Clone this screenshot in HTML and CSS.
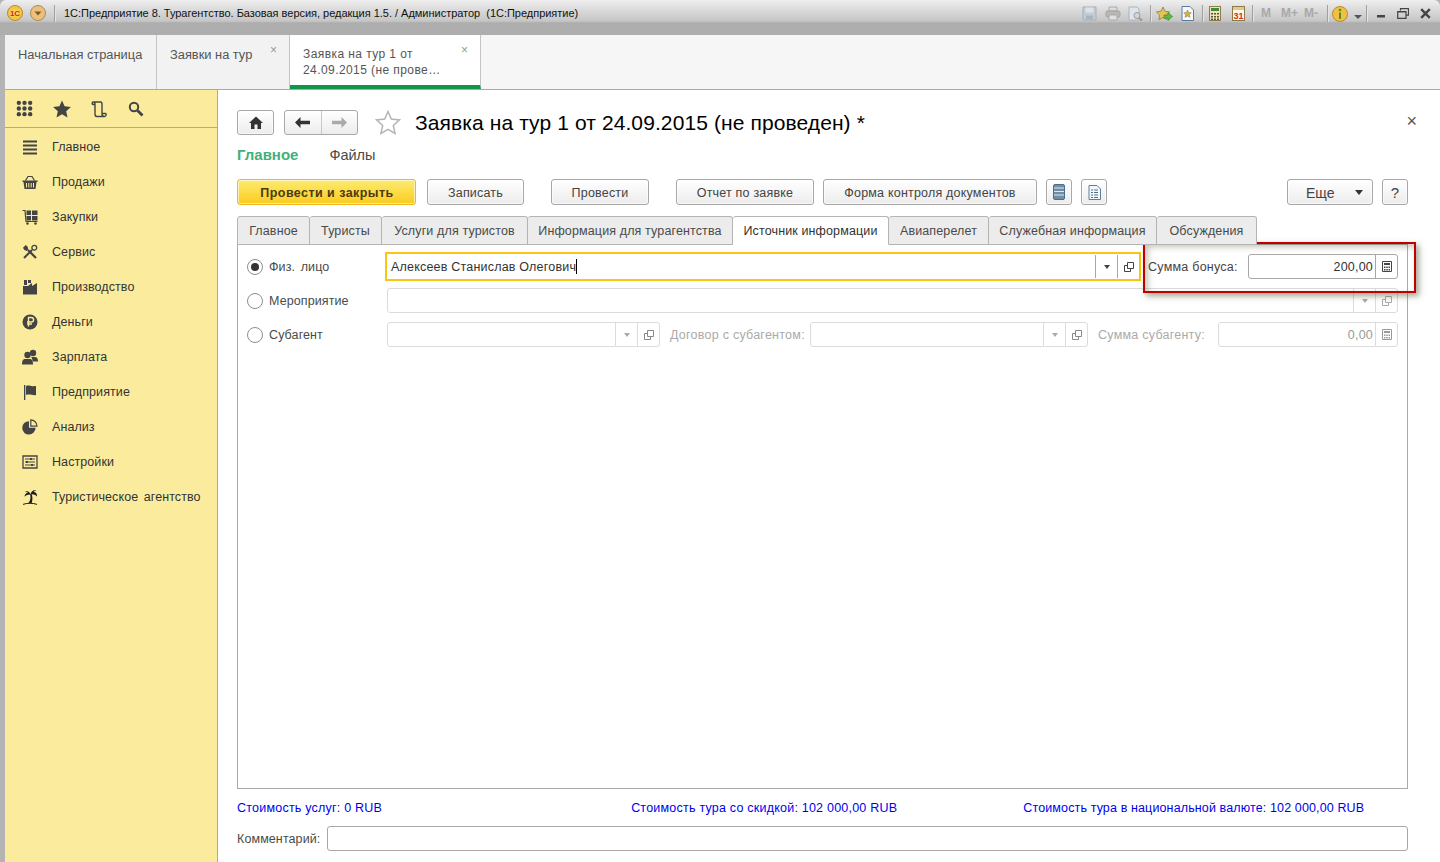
FILE: index.html
```html
<!DOCTYPE html>
<html lang="ru">
<head>
<meta charset="utf-8">
<title>Заявка на тур</title>
<link rel="stylesheet" href="styles.css">
</head>
<body>
<div class="window">
  <header class="titlebar">
    <svg class="logo" width="16" height="16" viewBox="0 0 16 16"><circle cx="8" cy="8" r="7.500" fill="#f5c542" stroke="#b98a2c"/><ellipse cx="8" cy="8" rx="5.500" ry="4" fill="#f0d060"/><text x="8" y="11" font-size="8" font-weight="700" text-anchor="middle" fill="#d8261c" font-family="Liberation Sans">1С</text></svg>
    <svg class="logo2" width="16" height="16" viewBox="0 0 16 16"><circle cx="8" cy="8" r="7.500" fill="#ecc07a" stroke="#a98a5c"/><path d="M4.500 6.500h7L8 10.500z" fill="#7a5a30"/></svg>
    <span class="tsep first"></span>
    <span class="wintitle">1С:Предприятие 8. Турагентство. Базовая версия, редакция 1.5. / Администратор  (1С:Предприятие)</span>
    <div class="tools">
      <svg class="t-save" width="15" height="15" viewBox="0 0 15 15"><path d="M1 1h13v13H1z" fill="#c3ccd2" stroke="#a3b0ba"/><path d="M3.500 1.500h8v5h-8z" fill="#dde2e6"/><path d="M4 9.500h7v4H4z" fill="#a9b5be"/></svg>
      <svg class="t-print" width="16" height="15" viewBox="0 0 16 15"><path d="M4 1h8v4H4z" fill="#ddd" stroke="#aaa"/><rect x="1" y="5" width="14" height="6" rx="1.500" fill="#b9b6b4" stroke="#a5a2a0"/><path d="M4 9h8v5H4z" fill="#e2e0de" stroke="#aaa"/></svg>
      <svg class="t-prev" width="16" height="15" viewBox="0 0 16 15"><path d="M2 1h8l2 2v11H2z" fill="#dfe5ea" stroke="#a9b5be"/><circle cx="10" cy="9.500" r="3" fill="#cfd7dd" stroke="#999"/><path d="m12 12 3 2.500" stroke="#999" stroke-width="2"/></svg>
      <span class="tsep s1"></span>
      <svg class="t-fav" width="17" height="16" viewBox="0 0 17 16"><path d="m7 1 2 4.300 4.600.6-3.300 3.200.8 4.600L7 11.500l-4.100 2.200.8-4.600L.4 5.900 5 5.300z" fill="#e6c650" stroke="#8d7b3c" stroke-width=".8"/><path d="M8 9h4V6.500l4.500 4-4.500 4V12H8z" fill="#5dbb46" stroke="#3c8a2b" stroke-width=".7"/></svg>
      <svg class="t-doc" width="13" height="15" viewBox="0 0 13 15"><path d="M1 .5h8l3.500 3.500v10.500H1z" fill="#f4f8fc" stroke="#5d7d9c"/><path d="m6.500 4 1.100 2.600 2.700.2-2 1.800.6 2.700-2.400-1.400-2.400 1.400.6-2.700-2-1.800 2.700-.2z" fill="#d8b13c" stroke="#8a7430" stroke-width=".5"/></svg>
      <span class="tsep s2"></span>
      <svg class="t-calc" width="12" height="15" viewBox="0 0 12 15"><rect x=".5" y=".5" width="11" height="14" fill="#f1e2b8" stroke="#8f7a4a"/><path d="M2 2h8v3H2z" fill="#3f8a3c"/><path d="M2 7h2v1.500H2zm3 0h2v1.500H5zm3 0h2v1.500H8zM2 10h2v1.500H2zm3 0h2v1.500H5zm3 0h2v1.500H8zM2 12.500h2V14H2zm3 0h2V14H5zm3 0h2V14H8z" fill="#554"/></svg>
      <svg class="t-cal" width="13" height="15" viewBox="0 0 13 15"><rect x=".5" y=".5" width="12" height="14" fill="#fbf6e6" stroke="#8f7a4a"/><path d="M1 1h11v3H1z" fill="#e3c98d"/><text x="6.500" y="13" font-size="9" font-weight="700" text-anchor="middle" fill="#dd2c1c" font-family="Liberation Sans">31</text></svg>
      <span class="tsep s3"></span>
      <span class="mem m1">M</span><span class="mem m2">M+</span><span class="mem m3">M-</span>
      <span class="tsep s4"></span>
      <svg class="t-info" width="16" height="16" viewBox="0 0 16 16"><circle cx="8" cy="8" r="7.500" fill="#f0c040" stroke="#b98a2c"/><circle cx="8" cy="4" r="1.300" fill="#5d8a30"/><path d="M7 6.500h2V13H7z" fill="#5d8a30"/></svg>
      <svg class="t-drop" width="8" height="5" viewBox="0 0 8 5"><path d="M0 1h8L4 5z" fill="#555"/></svg>
      <span class="tsep s5"></span>
      <svg class="t-min" width="8" height="3" viewBox="0 0 8 3"><path d="M0 0h8v2.500H0z" fill="#444"/></svg>
      <svg class="t-max" width="12" height="11" viewBox="0 0 12 11"><path d="M3.500 2.500V.7h8v6.500H9.500M.7 3.500h8.300v6.800H.7z" fill="none" stroke="#444" stroke-width="1.200"/><path d="M1 3h8v1.500H1z" fill="#444"/></svg>
      <svg class="t-close" width="11" height="11" viewBox="0 0 11 11"><path d="m1.200 1.200 8.600 8.600M9.800 1.200l-8.600 8.600" stroke="#444" stroke-width="2.400"/></svg>
    </div>
  </header>

  <nav class="opentabs">
    <div class="otab w1">Начальная страница</div>
    <div class="otab w2">Заявки на тур<span class="ox">×</span></div>
    <div class="otab w3 current"><span class="twoline">Заявка на тур 1 от<br>24.09.2015 (не прове…</span><span class="ox">×</span></div>
  </nav>

  <div class="body">
    <aside class="side">
      <div class="sidetop">
        <svg width="17" height="17" viewBox="0 0 18 18" fill="#444"><circle cx="3" cy="3" r="2.300"/><circle cx="9" cy="3" r="2.300"/><circle cx="15" cy="3" r="2.300"/><circle cx="3" cy="9" r="2.300"/><circle cx="9" cy="9" r="2.300"/><circle cx="15" cy="9" r="2.300"/><circle cx="3" cy="15" r="2.300"/><circle cx="9" cy="15" r="2.300"/><circle cx="15" cy="15" r="2.300"/></svg>
        <svg width="18" height="18" viewBox="0 0 18 18" fill="#444"><path d="m9 .5 2.600 5.800 6.300.7-4.700 4.200 1.300 6.300L9 14.300l-5.500 3.200 1.300-6.300L.1 7l6.300-.7z"/></svg>
        <svg width="17" height="18" viewBox="0 0 17 18" fill="none" stroke="#444" stroke-width="1.400"><path d="M3 2h6.500c1 0 1.500.8 1.500 2v10c0 1.500 1 2.500 2.500 2.500H6c-1.500 0-2-1-2-2.500V4C4 2.800 3.500 2 2 2c-1 0-1.200 2.500 0 2.500h2M11 13.500h3.500c1 0 1 3-1 3"/></svg>
        <svg width="16" height="16" viewBox="0 0 16 16" fill="none" stroke="#444"><circle cx="6" cy="6" r="4.200" stroke-width="2"/><path d="m9.500 9.500 5 5" stroke-width="2.800"/></svg>
      </div>
      <ul class="menu">
        <li><svg width="16" height="16" viewBox="0 0 16 16" fill="#444"><path d="M1 1.500h14v2H1zM1 5.500h14v2H1zM1 9.500h14v2H1zM1 13.500h14v2H1z"/></svg>Главное</li>
        <li><svg width="16" height="16" viewBox="0 0 16 16" fill="#444"><path d="M.5 6.500h15v1.500h-1l-1 7h-11l-1-7h-1z"/><path d="M3.500 6.500 6 2.500h4l2.500 4" fill="none" stroke="#444" stroke-width="1.200"/><path d="M4.500 9v4.500M6.800 9v4.500M9.200 9v4.500M11.500 9v4.500" stroke="#fbeb9b" stroke-width="1"/></svg>Продажи</li>
        <li><svg width="16" height="16" viewBox="0 0 16 16" fill="#444"><path d="M4.500 1.500h4.500v4.500H4.500zM10 1.500h5.500v4.500H10zM4.500 7h4.500v4.500H4.500zM10 7h5.500v4.500H10z"/><path d="M.5 1.500h2.500l1 11h11.500" fill="none" stroke="#444" stroke-width="1.200"/><circle cx="5.500" cy="14.500" r="1.300"/><circle cx="13.500" cy="14.500" r="1.300"/></svg>Закупки</li>
        <li><svg width="16" height="16" viewBox="0 0 16 16" fill="none" stroke="#444"><path d="M6 6 14 14" stroke-width="2.200"/><path d="M1 3.800 3.800 1c1.500 1 2.700 2.800 2.300 4.600L4.700 7C3 6.800 1.800 5.500 1 3.800z" fill="#444" stroke="none"/><path d="M10 6 2 14" stroke-width="2"/><circle cx="12.300" cy="3.700" r="2.400" stroke-width="1.300"/></svg>Сервис</li>
        <li><svg width="16" height="16" viewBox="0 0 16 16" fill="#444"><path d="M2 1h3v5h-3zM6 1h3v3h-3zM1 7l5 0 4-3v3l5-3v11.500H1z"/></svg>Производство</li>
        <li><svg width="16" height="16" viewBox="0 0 16 16"><circle cx="8" cy="8" r="7.500" fill="#444"/><path d="M6.500 12.500v-9h2.800c1.500 0 2.300 1 2.300 2.300S10.800 8 9.300 8H5M5 10h5" fill="none" stroke="#fbeb9b" stroke-width="1.400"/></svg>Деньги</li>
        <li><svg width="16" height="16" viewBox="0 0 16 16" fill="#444"><circle cx="11" cy="4" r="3.200"/><path d="M9 8h4c2 0 3 1.500 3 4.500h-5.500C10.500 10.500 10 9 9 8z"/><circle cx="5.500" cy="6" r="3.200"/><path d="M3 10h5c1.700 0 3 1.500 3 5.500H0C0 11.500 1.200 10 3 10z"/></svg>Зарплата</li>
        <li><svg width="16" height="16" viewBox="0 0 16 16" fill="#444"><path d="M2 1h1.300v15H2z"/><path d="M4 2c3-1.500 5 1 8.500 0H14v9c-3 1-6-1.500-10 0z"/></svg>Предприятие</li>
        <li><svg width="16" height="16" viewBox="0 0 16 16" fill="#444"><path d="M7 2.200V8.800h6.600A6.700 6.700 0 1 1 7 2.200z"/><path d="M8.800.8A6.500 6.500 0 0 1 15 7.200H8.800z" fill="none" stroke="#444" stroke-width="1.200"/></svg>Анализ</li>
        <li><svg width="16" height="16" viewBox="0 0 16 16" fill="none" stroke="#444"><path d="M1 2h14v12H1z" stroke-width="1.300"/><path d="M3 5h10M3 8h10M3 11h10" stroke-width="1"/><path d="M9 4v2M5 7v2M10 10v2" stroke-width="2"/></svg>Настройки</li>
        <li><svg width="16" height="16" viewBox="0 0 16 16" fill="#1c1c1c"><path d="M8 5c1 3 .5 6.500-1.500 9h3.200c1-3 1-6.500-.2-9z"/><path d="M8.500 5.500C7.500 2.500 5 1.500 3 3c1.200-.2 2.200 0 3 .8-2 .2-3.500 1.800-3.500 4C4 6 6.500 5.300 8.500 5.500zM8.500 5.500C9 2.300 11.500.3 14.500 1.500c-1.300.1-2.300.7-3 1.600C13.700 3 15.300 4.800 15 7.500 13.500 5.800 11 5 8.500 5.500z"/><path d="M1 15.400c4-1.500 10-1.500 14 0" stroke="#1c1c1c" fill="none"/></svg><span>Туристическое агентство</span></li>
      </ul>
    </aside>

    <main class="content">
      <div class="headrow">
        <button class="btn home"><svg width="14" height="13" viewBox="0 0 14 13" fill="#333"><path d="M7 .5 14 7h-2v6H8.500V8.500h-3V13H2V7H0z"/></svg></button>
        <div class="navgroup">
          <span class="navb"><svg width="15" height="11" viewBox="0 0 15 11" fill="#333"><path d="M0 5.500 5.500 0v3.700H15v3.600H5.500V11z"/></svg></span>
          <span class="navb"><svg width="15" height="11" viewBox="0 0 15 11" fill="#aaa"><path d="M15 5.500 9.500 0v3.700H0v3.600h9.500V11z"/></svg></span>
        </div>
        <svg class="favstar" width="26" height="25" viewBox="0 0 26 25"><path d="m13 1.500 3.300 7.600 8.200.8-6.200 5.500 1.800 8.100-7.100-4.200-7.100 4.200 1.800-8.100L1.500 9.900l8.200-.8z" fill="#fff" stroke="#b5b5b5" stroke-width="1.500"/></svg>
        <h1>Заявка на тур 1 от 24.09.2015 (не проведен) *</h1>
        <span class="closex">×</span>
      </div>

      <div class="sections"><span class="sec on">Главное</span><span class="sec">Файлы</span></div>

      <div class="cmdbar">
        <button class="btn primary b1">Провести и закрыть</button>
        <button class="btn b2">Записать</button>
        <button class="btn b3">Провести</button>
        <button class="btn b4">Отчет по заявке</button>
        <button class="btn b5">Форма контроля документов</button>
        <button class="btn b6"><svg width="12" height="16" viewBox="0 0 12 16"><rect x=".5" y=".5" width="11" height="15" rx="1.500" fill="#6f8ea8" stroke="#4f6c85"/><path d="M1 4h10M1 7.500h10M1 11h10" stroke="#dfe8ef"/></svg></button>
        <button class="btn b7"><svg width="13" height="15" viewBox="0 0 13 15"><path d="M1 .5h8l3.500 3.500v10.500H1z" fill="#f4f8fc" stroke="#5d7d9c"/><path d="M3 5h2M6 5h4M3 7.500h2M6 7.500h4M3 10h2M6 10h4M3 12.500h2M6 12.500h4" stroke="#51708c"/></svg></button>
        <button class="btn b8"><span>Еще</span><svg width="8" height="5" viewBox="0 0 8 5"><path d="M0 0h8L4 5z" fill="#333"/></svg></button>
        <button class="btn b9">?</button>
      </div>

      <div class="ftabs">
        <span class="ftab f1">Главное</span><span class="ftab f2">Туристы</span><span class="ftab f3">Услуги для туристов</span><span class="ftab f4">Информация для турагентства</span><span class="ftab f5 active">Источник информации</span><span class="ftab f6">Авиаперелет</span><span class="ftab f7">Служебная информация</span><span class="ftab f8">Обсуждения</span>
      </div>

      <section class="panel">
        <div class="frow r1">
          <span class="radio on"></span><label class="rlabel">Физ. лицо</label>
          <div class="field focus"><span class="val">Алексеев Станислав Олегович</span><span class="caret"></span><span class="fbtn"><svg width="6" height="4" viewBox="0 0 6 4"><path d="M0 0h6L3 4z" fill="#444"/></svg></span><span class="fbtn"><svg class="openico" width="10" height="10" viewBox="0 0 10 10" fill="none" stroke="#444"><path d="M3.500 .5h6v6h-6zM3 3.500H.5v6h6V7"/></svg></span></div>
          <label class="flabel bonus">Сумма бонуса:</label>
          <div class="field num active"><span class="val right">200,00</span><span class="fbtn calc"><svg width="10" height="11" viewBox="0 0 10 11" fill="#444"><path d="M.5.500h9v10h-9z" fill="none" stroke="#444"/><path d="M2 2h6v2H2zM2 5.500h1.500V7H2zM4.300 5.500h1.500V7H4.300zM6.600 5.500H8V7H6.600zM2 8h1.500v1.500H2zM4.300 8h1.500v1.500H4.300zM6.600 8H8v1.500H6.600z"/></svg></span></div>
        </div>
        <div class="frow r2">
          <span class="radio"></span><label class="rlabel">Мероприятие</label>
          <div class="field dis wide"><span class="val"></span><span class="fbtn"><svg width="6" height="4" viewBox="0 0 6 4"><path d="M0 0h6L3 4z" fill="#aaa"/></svg></span><span class="fbtn"><svg class="openico" width="10" height="10" viewBox="0 0 10 10" fill="none" stroke="#aaa"><path d="M3.500 .5h6v6h-6zM3 3.500H.5v6h6V7"/></svg></span></div>
        </div>
        <div class="frow r3">
          <span class="radio"></span><label class="rlabel">Субагент</label>
          <div class="field dis sub"><span class="val"></span><span class="fbtn"><svg width="6" height="4" viewBox="0 0 6 4"><path d="M0 0h6L3 4z" fill="#aaa"/></svg></span><span class="fbtn"><svg class="openico" width="10" height="10" viewBox="0 0 10 10" fill="none" stroke="#888"><path d="M3.500 .5h6v6h-6zM3 3.500H.5v6h6V7"/></svg></span></div>
          <label class="flabel muted dog">Договор с субагентом:</label>
          <div class="field dis contract"><span class="val"></span><span class="fbtn"><svg width="6" height="4" viewBox="0 0 6 4"><path d="M0 0h6L3 4z" fill="#aaa"/></svg></span><span class="fbtn"><svg class="openico" width="10" height="10" viewBox="0 0 10 10" fill="none" stroke="#888"><path d="M3.500 .5h6v6h-6zM3 3.500H.5v6h6V7"/></svg></span></div>
          <label class="flabel muted sumsub">Сумма субагенту:</label>
          <div class="field dis num"><span class="val right">0,00</span><span class="fbtn calc"><svg width="10" height="11" viewBox="0 0 10 11" fill="#999"><path d="M.5.500h9v10h-9z" fill="none" stroke="#999"/><path d="M2 2h6v2H2zM2 5.500h1.500V7H2zM4.300 5.500h1.500V7H4.300zM6.600 5.500H8V7H6.600zM2 8h1.500v1.500H2zM4.300 8h1.500v1.500H4.300zM6.600 8H8v1.500H6.600z"/></svg></span></div>
        </div>
      </section>

      <div class="totals">
        <span class="t1">Стоимость услуг: 0 RUB</span>
        <span class="t2">Стоимость тура со скидкой: 102 000,00 RUB</span>
        <span class="t3">Стоимость тура в национальной валюте: 102 000,00 RUB</span>
      </div>
      <div class="commentrow"><label>Комментарий:</label><div class="comment"></div></div>
    </main>
  </div>
  <div class="redbox"></div>
</div>
</body>
</html>
```
FILE: styles.css
```css
* { box-sizing: border-box; }
html, body { margin: 0; height: 100%; overflow: hidden; }
body { font-family: "Liberation Sans", Arial, sans-serif; font-size: 12.5px; color: #4a4a4a; background: #fff; }
.window { position: relative; width: 1440px; height: 862px; display: flex; flex-direction: column; background: #b4b4b4; }
button { font: inherit; color: inherit; }

.titlebar { height: 35px; flex: none; display: flex; align-items: flex-start; padding: 5px 0 0 7px; border-radius: 6px 6px 0 0; background: linear-gradient(#efefef 0, #dedede 8px, #c6c6c6 21px, #adadad 23px, #aeaeae 100%); }
.logo { flex: none; }
.logo2 { flex: none; margin-left: 7px; }
.tsep { flex: none; width: 1px; height: 17px; background: #9f9f9f; box-shadow: 1px 0 0 #e4e4e4; }
.tsep.first { margin: 0 9px 0 8px; }
.wintitle { font-size: 11px; letter-spacing: -.02px; color: #111; line-height: 16px; white-space: pre; }
.tools { margin-left: auto; display: flex; align-items: center; height: 17px; width: 358px; flex: none; position: relative; }
.tools svg { flex: none; }
.t-save { margin-left: 0; }
.t-print { margin-left: 8px; }
.t-prev { margin-left: 6px; }
.tsep.s1 { margin-left: 7px; }
.t-fav { margin-left: 5px; }
.t-doc { margin-left: 8px; }
.tsep.s2 { margin-left: 8px; }
.t-calc { margin-left: 6px; }
.t-cal { margin-left: 11px; }
.tsep.s3 { margin-left: 7px; }
.mem { font-size: 12px; font-weight: 700; color: #a8a8a8; line-height: 15px; }
.m1 { margin-left: 8px; width: 11px; }
.m2 { margin-left: 9px; width: 19px; }
.m3 { margin-left: 4px; width: 19px; }
.tsep.s4 { margin-left: 4px; }
.t-info { margin-left: 4px; }
.t-drop { margin-left: 6px; margin-top: 5px; }
.tsep.s5 { margin-left: 4px; }
.t-min { margin-left: 10px; margin-top: 6px; }
.t-max { margin-left: 12px; }
.t-close { margin-left: 11px; }

.opentabs { height: 55px; flex: none; margin-left: 5px; background: #f6f6f6; display: flex; border-bottom: 1px solid #a9a9a9; }
.otab { position: relative; height: 54px; padding: 12px 0 0 13px; line-height: 15px; border-right: 1px solid #c4c4c4; background: #f2f2f2; color: #555; flex: none; font-size: 12.85px; }
.w1 { width: 152px; }
.w2 { width: 133px; }
.w3 { width: 191px; background: #fff; border-bottom: 4px solid #0f9648; }
.twoline { display: block; font-size: 12px; letter-spacing: .42px; line-height: 16px; margin-top: -1px; }
.ox { position: absolute; top: 9px; right: 12px; font-size: 12px; line-height: 12px; color: #999; }

.body { flex: 1; min-height: 0; display: flex; margin-left: 5px; background: #fff; }
.side { width: 213px; flex: none; background: #fbec9d; border-right: 1px solid #c8ae3a; color: #333; }
.sidetop { height: 38px; border-bottom: 1px solid #c8ae3a; display: flex; align-items: center; padding: 0 0 0 11px; gap: 20px; }
.menu { list-style: none; margin: 0; padding: 1px 0 0; }
.menu li { height: 35px; display: flex; align-items: center; padding-left: 17px; gap: 14px; white-space: nowrap; letter-spacing: .08px; word-spacing: 2px; }
.menu li svg { flex: none; }

.content { flex: 1; min-width: 0; padding: 20px 32px 0 19px; display: flex; flex-direction: column; }
.headrow { height: 25px; display: flex; align-items: center; position: relative; }
.btn { height: 26px; padding: 1px 0 0; border: 1px solid #a8a8a8; border-radius: 3px; background: linear-gradient(#fff, #ececec); color: #444; display: flex; align-items: center; justify-content: center; flex: none; letter-spacing: .2px; box-shadow: inset 0 0 0 1px rgba(255,255,255,.6); }
.home { width: 37px; height: 25px; padding: 0; }
.navgroup { width: 74px; height: 25px; margin-left: 10px; display: flex; border: 1px solid #a8a8a8; border-radius: 3px; background: linear-gradient(#fff, #ececec); flex: none; }
.navb { flex: 1; display: flex; align-items: center; justify-content: center; }
.navb + .navb { border-left: 1px solid #c8c8c8; }
.favstar { margin-left: 17px; flex: none; }
h1 { margin: 0 0 0 14px; font-size: 21px; font-weight: 400; letter-spacing: .1px; color: #000; white-space: nowrap; line-height: 25px; }
.closex { position: absolute; right: -9px; top: 1px; font-size: 18px; line-height: 20px; color: #555; }

.sections { height: 20px; margin-top: 10px; display: flex; font-size: 14.5px; line-height: 20px; }
.sec { color: #4a4a4a; margin-left: 31px; }
.sec.on { font-weight: 700; font-size: 15px; color: #3fb17a; margin-left: 0; }

.cmdbar { display: flex; margin-top: 14px; height: 26px; }
.primary { width: 179px; background: linear-gradient(#fdeb6e, #fbcb20); border-color: #eeb920; font-weight: 700; letter-spacing: .45px; color: #4a3a10; padding-left: 1px; }
.b2 { width: 97px; margin-left: 11px; }
.b3 { width: 98px; margin-left: 27px; }
.b4 { width: 138px; margin-left: 27px; }
.b5 { width: 214px; margin-left: 9px; }
.b6 { width: 26px; margin-left: 9px; padding: 0; }
.b7 { width: 26px; margin-left: 9px; padding: 0; }
.b8 { width: 86px; margin-left: auto; justify-content: flex-start; padding-left: 18px; font-size: 14px; letter-spacing: 0; }
.b8 svg { margin-left: 20px; }
.b9 { width: 26px; margin-left: 9px; font-size: 15px; }

.ftabs { display: flex; margin-top: 11px; height: 29px; position: relative; z-index: 1; }
.ftab { height: 29px; flex: none; line-height: 28px; text-align: center; background: #ececec; border: 1px solid #b4b4b4; border-left: 0; border-radius: 3px 3px 0 0; white-space: nowrap; letter-spacing: .13px; }
.f1 { width: 73px; border-left: 1px solid #b4b4b4; }
.f2 { width: 72px; }
.f3 { width: 146px; }
.f4 { width: 205px; }
.f5 { width: 156px; }
.f6 { width: 100px; }
.f7 { width: 168px; }
.f8 { width: 100px; }
.ftab.active { background: #fff; border-bottom-color: #fff; }

.panel { height: 545px; flex: none; margin-top: -1px; border: 1px solid #aaa; padding: 7px 9px 0 9px; display: flex; flex-direction: column; }
.frow { display: flex; align-items: center; }
.r1 { height: 29px; }
.r2 { height: 25px; margin-top: 7px; }
.r3 { height: 25px; margin-top: 9px; }
.radio { width: 16px; height: 16px; flex: none; border: 1px solid #8e8e8e; border-radius: 50%; background: #fff; display: flex; align-items: center; justify-content: center; }
.radio.on::before { content: ""; width: 8px; height: 8px; border-radius: 50%; background: #333; }
.rlabel { width: 124px; padding-left: 6px; flex: none; letter-spacing: .1px; word-spacing: 2px; }
.field { height: 25px; border: 1px solid #a8a8a8; border-radius: 3px; background: #fff; display: flex; align-items: center; flex: none; letter-spacing: .2px; }
.val { flex: 1; padding: 0 3px 0 5px; white-space: nowrap; }
.val.right { text-align: right; padding-right: 2px; }
.fbtn { width: 22px; height: 100%; flex: none; border-left: 1px solid #a8a8a8; display: flex; align-items: center; justify-content: center; }
.focus { width: 756px; height: 29px; margin-left: -2px; border: 2px solid #f9c613; border-radius: 0; color: #333; }
.focus .val { flex: 0 0 auto; padding: 0 0 0 4px; }
.focus .caret { width: 1px; height: 15px; background: #000; margin-right: auto; }
.focus .fbtn { height: 23px; }
.bonus { margin-left: 7px; width: 100px; color: #444; flex: none; }
.num { width: 150px; }
.active { color: #333; }
.dis { border-color: #dcdcdc; color: #999; }
.dis .fbtn { border-left-color: #dcdcdc; }
.wide { width: 1011px; margin-left: 0; }
.sub { width: 273px; }
.flabel { white-space: nowrap; letter-spacing: .25px; }
.muted { color: #aaa; }
.dog { margin-left: 10px; width: 140px; flex: none; }
.contract { width: 278px; }
.sumsub { margin-left: 10px; width: 120px; flex: none; }
.dis.num { width: 180px; }

.totals { position: relative; display: flex; height: 20px; margin-top: 9px; line-height: 20px; color: #0000ee; white-space: nowrap; }
.t1, .t2 { letter-spacing: .22px; }
.t3 { letter-spacing: .13px; }
.t2 { margin-left: 249px; }
.t3 { margin-left: 126px; }
.commentrow { display: flex; align-items: center; margin-top: 8px; height: 25px; }
.commentrow label { width: 90px; flex: none; letter-spacing: .1px; }
.comment { flex: 1; height: 25px; border: 1px solid #a8a8a8; border-radius: 3px; background: #fff; }

.redbox { position: absolute; left: 1143px; top: 242px; width: 273px; height: 51px; border: 2px solid #c00000; box-shadow: 3px 3px 6px rgba(90,90,60,.55), inset 3px 3px 6px rgba(90,90,60,.35); pointer-events: none; }
```
